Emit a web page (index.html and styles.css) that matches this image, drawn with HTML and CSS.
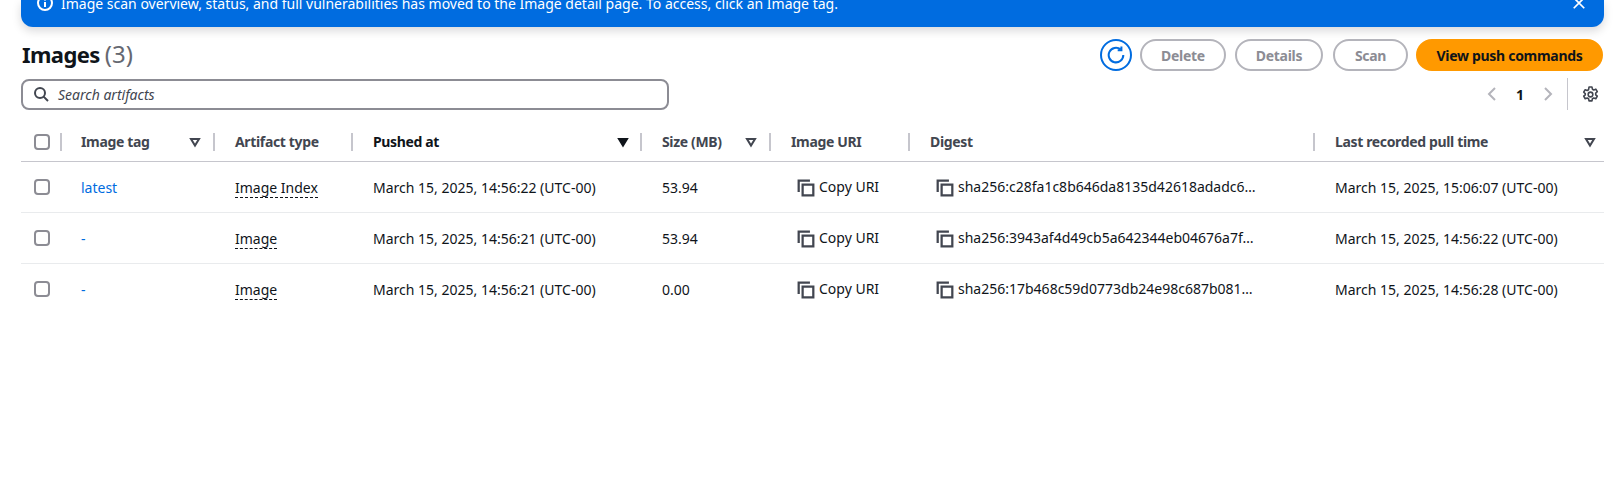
FILE: index.html
```html
<!DOCTYPE html>
<html lang="en">
<head>
  <meta charset="UTF-8">
  <title>Images</title>
  <link rel="stylesheet" href="styles.css">
</head>
<body>
  <svg class="sprite" width="0" height="0">
    <symbol id="i-copy" viewBox="0 0 16 16"><path d="M1.5 11.5V1.5h10"/><path d="M5 5h9.500v9.500H5z"/></symbol>
    <symbol id="i-sort" viewBox="0 0 16 16"><path d="M4 5h8l-4 6.5z"/></symbol>
  </svg>

  <div class="flash">
    <svg class="flash-icon" viewBox="0 0 16 16"><circle cx="8" cy="8" r="7"/><path d="M8 7v5M8 4v1.5"/></svg>
    <span class="flash-text">Image scan overview, status, and full vulnerabilities has moved to the Image detail page. To access, click an Image tag.</span>
    <svg class="flash-close" viewBox="0 0 16 16"><path d="M2 2l12 12M14 2L2 14"/></svg>
  </div>

  <div class="header">
    <h1>Images <span class="count">(3)</span></h1>
    <div class="actions">
      <button class="btn-icon">
        <svg viewBox="0 0 16 16"><path d="M14.5 8a6.5 6.5 0 1 1-2.4-5"/><path d="M12.8 .5v3.3H9.5"/></svg>
      </button>
      <button class="btn btn-delete">Delete</button>
      <button class="btn btn-details">Details</button>
      <button class="btn btn-scan">Scan</button>
      <button class="btn btn-primary">View push commands</button>
    </div>
  </div>

  <div class="tools">
    <div class="search">
      <svg viewBox="0 0 16 16"><circle cx="7" cy="7" r="5"/><path d="M10.6 10.6L15 15"/></svg>
      <span>Search artifacts</span>
    </div>
    <div class="pager">
      <svg class="chev" viewBox="0 0 16 16"><path d="M11 2L5 8l6 6"/></svg>
      <span class="page">1</span>
      <svg class="chev" viewBox="0 0 16 16"><path d="M5 2l6 6-6 6"/></svg>
      <span class="pager-line"></span>
      <svg class="gear" viewBox="0 0 16 16"><circle cx="8" cy="8" r="2.2"/><path d="M6.6 1h2.8l.4 2 1.3.7 1.9-.7 1.4 2.4-1.5 1.3v1.6l1.5 1.3-1.4 2.4-1.9-.7-1.3.7-.4 2H6.6l-.4-2-1.3-.7-1.9.7-1.4-2.4 1.5-1.3V7.2L1.6 5.9 3 3.5l1.9.7 1.3-.7z"/></svg>
    </div>
  </div>

  <table>
    <colgroup>
      <col class="c-check"><col class="c-tag"><col class="c-type"><col class="c-pushed">
      <col class="c-size"><col class="c-uri"><col class="c-digest"><col class="c-last">
    </colgroup>
    <thead>
      <tr>
        <th class="check"><span class="box"></span></th>
        <th><div class="th th-tag">Image tag <svg class="sort"><use href="#i-sort"/></svg></div></th>
        <th><div class="th">Artifact type</div></th>
        <th><div class="th th-pushed">Pushed at <svg class="sort solid"><use href="#i-sort"/></svg></div></th>
        <th><div class="th">Size (MB) <svg class="sort"><use href="#i-sort"/></svg></div></th>
        <th><div class="th">Image URI</div></th>
        <th><div class="th">Digest</div></th>
        <th><div class="th th-last">Last recorded pull time <svg class="sort"><use href="#i-sort"/></svg></div></th>
      </tr>
    </thead>
    <tbody>
      <tr>
        <td class="check"><span class="box"></span></td>
        <td class="tag"><a href="#">latest</a></td>
        <td><span class="dashed">Image Index</span></td>
        <td>March 15, 2025, 14:56:22 (UTC-00)</td>
        <td>53.94</td>
        <td><span class="copy"><svg><use href="#i-copy"/></svg>Copy URI</span></td>
        <td><span class="copy"><svg><use href="#i-copy"/></svg>sha256:c28fa1c8b646da8135d42618adadc6…</span></td>
        <td>March 15, 2025, 15:06:07 (UTC-00)</td>
      </tr>
      <tr>
        <td class="check"><span class="box"></span></td>
        <td class="tag"><a href="#">-</a></td>
        <td><span class="dashed">Image</span></td>
        <td>March 15, 2025, 14:56:21 (UTC-00)</td>
        <td>53.94</td>
        <td><span class="copy"><svg><use href="#i-copy"/></svg>Copy URI</span></td>
        <td><span class="copy"><svg><use href="#i-copy"/></svg>sha256:3943af4d49cb5a642344eb04676a7f…</span></td>
        <td>March 15, 2025, 14:56:22 (UTC-00)</td>
      </tr>
      <tr>
        <td class="check"><span class="box"></span></td>
        <td class="tag"><a href="#">-</a></td>
        <td><span class="dashed">Image</span></td>
        <td>March 15, 2025, 14:56:21 (UTC-00)</td>
        <td>0.00</td>
        <td><span class="copy"><svg><use href="#i-copy"/></svg>Copy URI</span></td>
        <td><span class="copy"><svg><use href="#i-copy"/></svg>sha256:17b468c59d0773db24e98c687b081…</span></td>
        <td>March 15, 2025, 14:56:28 (UTC-00)</td>
      </tr>
    </tbody>
  </table>
</body>
</html>
```

FILE: styles.css
```css
body {
  font-family: "Noto Sans", Arial, sans-serif;
  font-size: 14px;
  color: #0f141a;
  margin: 0;
  padding: 0 16px 0 21px;
  background-color: #fff;
  overflow: hidden;
}
svg {
  fill: none;
  stroke: currentColor;
  stroke-width: 2;
  flex: none;
}
.sprite {
  position: absolute;
}

.flash {
  display: flex;
  align-items: center;
  box-sizing: border-box;
  height: 27px;
  padding: 0 18px 21px 16px;
  background-color: #006ce0;
  color: #fff;
  border-radius: 0 0 12px 12px;
  box-shadow: 0 4px 10px rgba(0, 7, 22, 0.15);
}
.flash-icon {
  width: 16px;
  height: 16px;
  margin-right: 8px;
}
.flash-text {
  flex: 1;
  white-space: nowrap;
}
.flash-close {
  width: 14px;
  height: 14px;
}

.header {
  display: flex;
  justify-content: space-between;
  align-items: center;
  margin-top: 12px;
  height: 32px;
}
h1 {
  margin: -3px 0 0 1px;
  font-size: 22px;
  font-weight: 700;
  letter-spacing: -0.6px;
}
.count {
  font-size: 24px;
  font-weight: 400;
  letter-spacing: 0;
  color: #656871;
}
.actions {
  display: flex;
  align-items: center;
  margin-right: 1px;
}
.btn-icon {
  box-sizing: border-box;
  width: 32px;
  height: 32px;
  padding: 0;
  margin-right: 8px;
  border: 2px solid #006ce0;
  border-radius: 50%;
  background-color: #fff;
  color: #006ce0;
  display: flex;
  align-items: center;
  justify-content: center;
}
.btn-icon svg {
  width: 18px;
  height: 18px;
  stroke-width: 1.8;
}
.btn {
  box-sizing: border-box;
  height: 32px;
  padding: 0;
  font-family: inherit;
  font-size: 14px;
  font-weight: 700;
  letter-spacing: -0.3px;
  border: 2px solid #b4b4bb;
  border-radius: 20px;
  background-color: #fff;
  color: #8c8c94;
}
.btn-delete {
  width: 86px;
  margin-right: 9px;
}
.btn-details {
  width: 88px;
  margin-right: 10px;
}
.btn-scan {
  width: 75px;
  margin-right: 8px;
}
.btn-primary {
  width: 187px;
  background-color: #ff9900;
  border-color: #ff9900;
  color: #0f141a;
}

.tools {
  display: flex;
  justify-content: space-between;
  align-items: center;
  margin-top: 7px;
}
.search {
  display: flex;
  align-items: center;
  box-sizing: border-box;
  width: 648px;
  height: 31px;
  padding: 0 10px;
  border: 2px solid #8c8c94;
  border-radius: 8px;
  font-style: italic;
  color: #424650;
}
.search svg {
  width: 16px;
  height: 16px;
  margin-right: 9px;
}
.pager {
  display: flex;
  align-items: center;
  height: 32px;
}
.chev {
  width: 16px;
  height: 16px;
  color: #b4b4bb;
}
.page {
  width: 40px;
  text-align: center;
  font-weight: 700;
}
.pager-line {
  width: 1px;
  height: 32px;
  margin: 0 14px 0 11px;
  background-color: #c6c6cd;
}
.gear {
  width: 17px;
  height: 17px;
  color: #424650;
  margin-right: 5px;
  stroke-width: 1.5;
  stroke-linejoin: round;
}

table {
  width: 1583px;
  margin-top: 14px;
  table-layout: fixed;
  border-collapse: collapse;
}
.c-check { width: 39px; }
.c-tag { width: 153px; }
.c-type { width: 138px; }
.c-pushed { width: 289px; }
.c-size { width: 129px; }
.c-uri { width: 139px; }
.c-digest { width: 405px; }
.c-last { width: 291px; }
th {
  height: 35px;
  padding: 0 0 2px;
  text-align: left;
  border-bottom: 1px solid #c6c6cd;
}
.th {
  display: flex;
  justify-content: space-between;
  align-items: center;
  height: 18px;
  padding: 0 10px 0 20px;
  font-weight: 700;
  letter-spacing: -0.35px;
  color: #424650;
  border-left: 2px solid #c6c6cd;
}
.th-tag {
  padding: 0 10px 0 19px;
}
.th-pushed {
  padding-right: 9px;
  color: #0f141a;
}
.th-last {
  padding-right: 6px;
}
.sort {
  width: 16px;
  height: 16px;
  color: #424650;
}
.sort.solid {
  fill: #0f141a;
  color: #0f141a;
}
td {
  height: 50px;
  padding: 0 0 0 22px;
  border-bottom: 1px solid #e9ebed;
  white-space: nowrap;
}
td.tag {
  padding-left: 21px;
}
tr:last-child td {
  border-bottom: none;
}
th.check, td.check {
  padding-left: 13px;
}
.box {
  display: block;
  box-sizing: border-box;
  width: 16px;
  height: 16px;
  border: 2px solid #8c8c94;
  border-radius: 4px;
}
a {
  color: #006ce0;
  text-decoration: none;
}
.dashed {
  border-bottom: 1px dashed #0f141a;
}
.copy {
  margin-left: 6px;
}
.copy svg {
  width: 18px;
  height: 18px;
  margin-right: 4px;
  margin-top: -2px;
  vertical-align: middle;
  color: #424650;
}
```
